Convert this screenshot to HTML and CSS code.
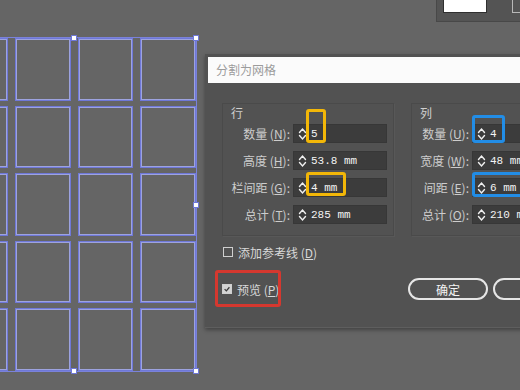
FILE: index.html
```html
<!DOCTYPE html>
<html lang="zh-CN">
<head>
    <meta charset="UTF-8">
    <meta name="viewport" content="width=device-width, initial-scale=1.0">
    <title>分割为网格</title>
    <link rel="stylesheet" href="styles.css">
</head>
<body>
    <div class="canvas">
        <div class="artboard">
            <div class="cell"></div><div class="cell"></div><div class="cell"></div><div class="cell"></div>
            <div class="cell"></div><div class="cell"></div><div class="cell"></div><div class="cell"></div>
            <div class="cell"></div><div class="cell"></div><div class="cell"></div><div class="cell"></div>
            <div class="cell"></div><div class="cell"></div><div class="cell"></div><div class="cell"></div>
            <div class="cell"></div><div class="cell"></div><div class="cell"></div><div class="cell"></div>
            <span class="handle h-tm"></span>
            <span class="handle h-tr"></span>
            <span class="handle h-mr"></span>
            <span class="handle h-br"></span>
            <span class="handle h-bm"></span>
        </div>

        <div class="swatches">
            <div class="swatch fill"></div>
            <div class="swatch stroke"></div>
        </div>

        <div class="dialog">
            <div class="title">分割为网格</div>
            <div class="dialog-body">
                <div class="groups">
                    <div class="group">
                        <div class="group-title">行</div>
                        <div class="fields">
                            <label>数量 (<u>N</u>):</label>
                            <div class="field"><svg class="spin" viewBox="0 0 9 14"><path d="M1.5 5.5 L4.5 2 L7.5 5.5 M1.5 8.5 L4.5 12 L7.5 8.5"/></svg><span>5</span></div>
                            <label>高度 (<u>H</u>):</label>
                            <div class="field"><svg class="spin" viewBox="0 0 9 14"><path d="M1.5 5.5 L4.5 2 L7.5 5.5 M1.5 8.5 L4.5 12 L7.5 8.5"/></svg><span>53.8 mm</span></div>
                            <label>栏间距 (<u>G</u>):</label>
                            <div class="field"><svg class="spin" viewBox="0 0 9 14"><path d="M1.5 5.5 L4.5 2 L7.5 5.5 M1.5 8.5 L4.5 12 L7.5 8.5"/></svg><span>4 mm</span></div>
                            <label>总计 (<u>T</u>):</label>
                            <div class="field"><svg class="spin" viewBox="0 0 9 14"><path d="M1.5 5.5 L4.5 2 L7.5 5.5 M1.5 8.5 L4.5 12 L7.5 8.5"/></svg><span>285 mm</span></div>
                        </div>
                    </div>
                    <div class="group cols">
                        <div class="group-title">列</div>
                        <div class="fields">
                            <label>数量 (<u>U</u>):</label>
                            <div class="field"><svg class="spin" viewBox="0 0 9 14"><path d="M1.5 5.5 L4.5 2 L7.5 5.5 M1.5 8.5 L4.5 12 L7.5 8.5"/></svg><span>4</span></div>
                            <label>宽度 (<u>W</u>):</label>
                            <div class="field"><svg class="spin" viewBox="0 0 9 14"><path d="M1.5 5.5 L4.5 2 L7.5 5.5 M1.5 8.5 L4.5 12 L7.5 8.5"/></svg><span>48 mm</span></div>
                            <label>间距 (<u>E</u>):</label>
                            <div class="field"><svg class="spin" viewBox="0 0 9 14"><path d="M1.5 5.5 L4.5 2 L7.5 5.5 M1.5 8.5 L4.5 12 L7.5 8.5"/></svg><span>6 mm</span></div>
                            <label>总计 (<u>O</u>):</label>
                            <div class="field"><svg class="spin" viewBox="0 0 9 14"><path d="M1.5 5.5 L4.5 2 L7.5 5.5 M1.5 8.5 L4.5 12 L7.5 8.5"/></svg><span>210 mm</span></div>
                        </div>
                    </div>
                </div>

                <div class="check guides"><span class="box"></span><span>添加参考线 (<u>D</u>)</span></div>

                <div class="footer">
                    <div class="check"><span class="box checked"><svg viewBox="0 0 10 10"><path d="M2 5.2 L4.2 7.3 L8 2.8"/></svg></span><span>预览 (<u>P</u>)</span></div>
                    <button class="btn">确定</button>
                    <button class="btn">取消</button>
                </div>
            </div>

            <span class="mark yellow m-count"></span>
            <span class="mark yellow m-gutter"></span>
            <span class="mark blue m-cols"></span>
            <span class="mark blue m-gap"></span>
            <span class="mark red m-preview"></span>
        </div>
    </div>
</body>
</html>
```

FILE: styles.css
```css
body {
    margin: 0;
    font-family: "Noto Sans CJK SC", "Noto Sans", sans-serif;
}
.canvas {
    position: relative;
    width: 520px;
    height: 390px;
    overflow: hidden;
    background-color: #656565;
}

/* artboard split into 5 x 4 */
.artboard {
    position: absolute;
    left: -48px;
    top: 38px;
    width: 244px;
    height: 333px;
    display: grid;
    grid-template-columns: repeat(4, 1fr);
    grid-template-rows: repeat(5, 1fr);
    column-gap: 7px;
    row-gap: 5px;
    outline: 1px solid #7a82da;
}
.cell {
    border: 1px solid #6f78d8;
    box-shadow: inset 0 0 0 1px #9da3df;
}
.handle {
    position: absolute;
    width: 4px;
    height: 4px;
    background-color: #fff;
    border: 1px solid #6f78d6;
    transform: translate(-50%, -50%);
}
.h-tm { left: 50%; top: 0; }
.h-tr { left: 100%; top: 0; }
.h-mr { left: 100%; top: 50%; }
.h-br { left: 100%; top: 100%; }
.h-bm { left: 50%; top: 100%; }

.swatches {
    position: absolute;
    left: 436px;
    top: 0;
    width: 90px;
    height: 21px;
    background-color: #545454;
    border-left: 1px solid #484848;
    border-bottom: 1px solid #484848;
}
.swatch {
    position: absolute;
    top: -1px;
    height: 12px;
}
.fill {
    left: 6px;
    width: 42px;
    background-color: #fff;
    border: 1px solid #2f2f2f;
}
.stroke {
    left: 75px;
    width: 12px;
    border: 1px solid #b8b8b8;
}

/* dialog */
.dialog {
    position: absolute;
    left: 205px;
    top: 54px;
    width: 330px;
    height: 270px;
    padding: 3px 0 0 3px;
    background-color: #525252;
    border-bottom: 1px solid #5e5e5e;
    box-shadow: 0 2px 4px rgba(0, 0, 0, 0.35);
}
.title {
    height: 26px;
    line-height: 26px;
    padding-left: 8px;
    background-color: #fbfbfb;
    color: #9c9c9c;
    font-size: 12px;
}
.dialog-body {
    padding: 20px 0 0 14px;
    color: #d4d4d4;
    font-size: 12px;
}
.groups {
    display: flex;
    gap: 17px;
}
.group {
    padding: 0 6px 11px 5px;
    border: 1px solid #4a4a4a;
    box-shadow: 1px 1px 0 #585858;
}
.group-title {
    height: 14px;
    line-height: 14px;
    padding: 2px 0 0 3px;
    margin-bottom: 4px;
    color: #cfcfcf;
}
.fields {
    display: grid;
    grid-template-columns: 62px 94px;
    grid-auto-rows: 19px;
    column-gap: 3px;
    row-gap: 8px;
}
.cols .fields {
    grid-template-columns: 52px 94px;
}
.fields label {
    line-height: 19px;
    text-align: right;
    white-space: nowrap;
    color: #cdcdcd;
}
.field {
    display: flex;
    align-items: center;
    background-color: #3c3c3c;
    border: 1px solid #373737;
}
.spin {
    width: 9px;
    height: 14px;
    margin-left: 4px;
    fill: none;
    stroke: #f0f0f0;
    stroke-width: 1.4;
    stroke-linecap: round;
}
.field span {
    padding-left: 4px;
    font-family: "Liberation Mono", monospace;
    font-size: 11px;
    color: #f4f4f4;
    white-space: nowrap;
}

.check {
    display: flex;
    align-items: center;
    gap: 5px;
    height: 16px;
    color: #d8d8d8;
    white-space: nowrap;
}
.guides {
    margin-top: 8px;
    padding-left: 1px;
}
.box {
    width: 8px;
    height: 8px;
    border: 1px solid #cfcfcf;
}
.box.checked {
    background-color: #d4d4d4;
    display: flex;
}
.box svg {
    width: 8px;
    height: 8px;
    fill: none;
    stroke: #3a3a3a;
    stroke-width: 1.6;
}

.footer {
    display: grid;
    grid-template-columns: 181px 80px 80px;
    gap: 5px;
    align-items: center;
    margin-top: 18px;
}
.btn {
    height: 22px;
    padding: 0;
    background: none;
    border: 2px solid #e6e6e6;
    border-radius: 11px;
    color: #f4f4f4;
    font-family: "Noto Sans CJK SC", sans-serif;
    font-size: 12px;
}

/* annotation boxes */
.mark {
    position: absolute;
    box-sizing: border-box;
    border: 3px solid;
    border-radius: 3px;
}
.yellow { border-color: #f3b708; }
.blue { border-color: #228de6; }
.red { border-color: #d5382f; }
.m-count { left: 101px; top: 55px; width: 20px; height: 34px; }
.m-gutter { left: 101px; top: 118px; width: 40px; height: 24px; }
.m-cols { left: 267px; top: 61px; width: 33px; height: 28px; }
.m-gap { left: 267px; top: 118px; width: 60px; height: 25px; }
.m-preview { left: 10px; top: 216px; width: 66px; height: 37px; }
```
